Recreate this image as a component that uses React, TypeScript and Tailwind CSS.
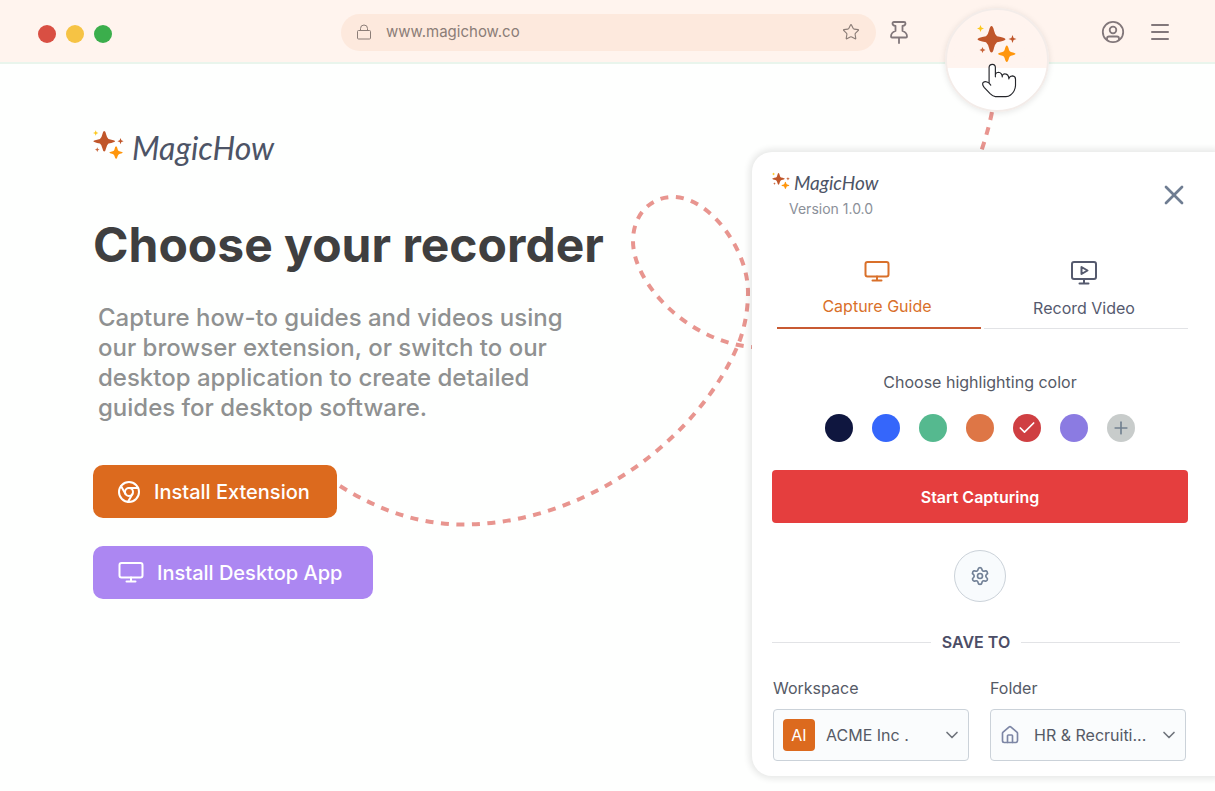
import { useState } from 'react';
import { Check, ChevronDown, Chromium, House, Menu, Plus, Settings, Star, X } from 'lucide-react';

const colors = [
  { name: 'Navy', className: 'bg-[#0f163f]' },
  { name: 'Blue', className: 'bg-[#3566fb]' },
  { name: 'Green', className: 'bg-[#55b98f]' },
  { name: 'Orange', className: 'bg-[#de7646]' },
  { name: 'Red', className: 'bg-[#cf3f42]' },
  { name: 'Purple', className: 'bg-[#8b7be2]' },
];

export default function App() {
  return (
    <div className="relative flex min-h-screen flex-col overflow-hidden bg-[#fefffe] font-['Inter',sans-serif]">
      <BrowserBar />
      <Trail />
      <div className="flex flex-1 items-start justify-between">
        <Intro />
        <ExtensionPanel />
      </div>
    </div>
  );
}

function BrowserBar() {
  return (
    <header className="relative z-10 flex h-16 items-center border-b-2 border-[#e9f5ec] bg-[#fff4ee] pt-[2px] pr-[43px] pl-[38px]">
      <div className="mt-[3px] flex gap-[10px]">
        <span className="size-[18px] rounded-full bg-[#d94f43]" />
        <span className="size-[18px] rounded-full bg-[#f6c344]" />
        <span className="size-[18px] rounded-full bg-[#3bae4c]" />
      </div>
      <div className="ml-[229px] flex h-[37px] flex-1 items-center rounded-full bg-[#fde9dd] pr-4 pl-[15px] text-[#8b7d77]">
        <LockIcon />
        <input
          aria-label="Address"
          defaultValue="www.magichow.co"
          className="ml-[14px] min-w-0 flex-1 bg-transparent text-[15px] outline-none"
        />
        <Star size={18} strokeWidth={1.5} />
      </div>
      <button aria-label="Pin" className="ml-[11px] text-[#82777a]">
        <PinIcon />
      </button>
      <button aria-label="Account" className="ml-[190px] text-[#82777a]">
        <AccountIcon />
      </button>
      <button aria-label="Menu" className="ml-[23px] text-[#82777a]">
        <Menu size={24} strokeWidth={2} />
      </button>

      {/* magnified extension icon */}
      <div className="absolute top-2 right-[166px] flex size-[104px] flex-col items-center rounded-full border-2 border-[#f3ece9] bg-linear-to-b from-[#fff4ef] from-58% to-white to-58% pt-[15px] shadow-[0_1px_6px_rgba(0,0,0,0.1)]">
        <Sparkles className="h-[38px] w-10" />
        <HandIcon />
      </div>
    </header>
  );
}

function Trail() {
  return (
    <svg
      className="pointer-events-none absolute top-0 right-0"
      width="1215"
      height="791"
      fill="none"
      stroke="#e8958f"
      strokeWidth="4"
      strokeDasharray="8 7.5"
      aria-hidden="true"
    >
      <path d="M340 486C380 511 420 524.500 463 524.500C590 524 700 435 738 345C744 330 748 312 748 292C748 250 710 197 673 197C650 197 633 215 633 241C633 285 690 342 752 347" />
      <path d="M992 112C989 127 985 140 980 155" />
    </svg>
  );
}

function Intro() {
  return (
    <main className="relative pt-[60px] pl-[93px]">
      <Logo
        className="gap-2"
        iconClass="mt-[6px] h-[30px] w-[31px]"
        textClass="text-[32px] leading-[48px]"
      />
      <h1 className="mt-[43px] text-5xl leading-[60px] font-bold text-[#3f3f40]">Choose your recorder</h1>
      <p className="mt-7 ml-[5px] w-[490px] text-2xl leading-[30px] font-medium text-[#8f9191]">
        Capture how-to guides and videos using our browser extension, or switch to our desktop application to
        create detailed guides for desktop software.
      </p>
      <div className="mt-[42px] flex flex-col items-start gap-7">
        <button className="flex h-[53px] items-center gap-[13px] rounded-[10px] bg-[#dc6a1e] pr-[27px] pl-6 text-xl font-medium text-white">
          <Chromium size={24} />
          Install Extension
        </button>
        <button className="flex h-[53px] items-center gap-[13px] rounded-[10px] bg-[#ac87f2] pr-[31px] pl-[25px] text-xl font-medium text-white">
          <MonitorIcon />
          Install Desktop App
        </button>
      </div>
    </main>
  );
}

function ExtensionPanel() {
  const [tab, setTab] = useState('guide');

  return (
    <aside className="relative mt-[88px] w-[463px] shrink-0 rounded-l-[20px] bg-white pt-[17px] pr-[27px] pb-[15px] pl-5 text-[#555a66] shadow-[0_0_6px_3px_rgba(0,0,0,0.09)]">
      <div className="flex items-start justify-between">
        <div>
          <Logo
            className="gap-1 pb-1"
            iconClass="mt-[3px] h-[18px] w-[18px]"
            textClass="text-[19px] leading-7"
          />
          <p className="ml-[17px] text-sm leading-4 text-[#8b9099]">Version 1.0.0</p>
        </div>
        <button aria-label="Close" className="mt-[10px] -mr-[2px] text-[#6f7d92]">
          <X size={32} strokeWidth={2} />
        </button>
      </div>

      <div role="tablist" className="mt-9 ml-[5px] flex gap-[3px]">
        <Tab label="Capture Guide" active={tab === 'guide'} onClick={() => setTab('guide')}>
          <MonitorIcon />
        </Tab>
        <Tab label="Record Video" active={tab === 'video'} onClick={() => setTab('video')}>
          <MonitorPlayIcon />
        </Tab>
      </div>

      <ColorPicker />

      <button className="mt-7 h-[53px] w-full rounded bg-[#e53e3e] text-base font-semibold text-white">
        Start Capturing
      </button>

      <button
        aria-label="Settings"
        className="mx-auto mt-[27px] flex size-[52px] items-center justify-center rounded-full border border-[#cbd2d9] bg-[#f8fbfd] text-[#718096]"
      >
        <Settings size={20} />
      </button>

      <div className="mt-7 mr-2 flex items-center gap-[11px]">
        <span className="h-px flex-1 bg-[#e2e3e6]" />
        <h2 className="text-base font-semibold text-[#4c4d66]">SAVE TO</h2>
        <span className="h-px flex-1 bg-[#e2e3e6]" />
      </div>

      <div className="mt-[22px] mr-[2px] ml-px grid grid-cols-2 gap-[21px]">
        <SelectField id="workspace" label="Workspace" value="ACME Inc ." selectClass="pl-[52px]">
          <span className="flex size-8 items-center justify-center rounded bg-[#dc6a1e] text-base text-white">
            AI
          </span>
        </SelectField>
        <SelectField id="folder" label="Folder" value="HR & Recruiti..." selectClass="pl-[43px]">
          <House size={20} className="text-[#7d86a5]" />
        </SelectField>
      </div>
    </aside>
  );
}

interface TabProps {
  label: string;
  active: boolean;
  onClick: () => void;
  children: React.ReactNode;
}

function Tab({ label, active, onClick, children }: TabProps) {
  return (
    <button
      role="tab"
      aria-selected={active}
      onClick={onClick}
      className={`flex h-[76px] flex-1 flex-col items-center gap-[11px] pt-2 pr-1 text-base ${
        active ? 'border-b-2 border-[#c85a32] text-[#d9702a]' : 'border-b border-[#e2e3e6] text-[#555a6e]'
      }`}
    >
      {children}
      {label}
    </button>
  );
}

function ColorPicker() {
  const [selected, setSelected] = useState('Red');

  return (
    <fieldset className="mt-[41px]">
      <legend className="mx-auto text-base">Choose highlighting color</legend>
      <div className="mt-5 flex justify-center gap-[19px]">
        {colors.map((color) => (
          <label key={color.name} className="relative size-7 text-white">
            <input
              type="radio"
              name="highlight"
              aria-label={color.name}
              checked={selected === color.name}
              onChange={() => setSelected(color.name)}
              className={`block size-7 appearance-none rounded-full ${color.className}`}
            />
            {selected === color.name && (
              <Check size={20} strokeWidth={2} className="pointer-events-none absolute top-1 left-1" />
            )}
          </label>
        ))}
        <button
          aria-label="Add color"
          className="flex size-7 items-center justify-center rounded-full bg-[#c8cccb] text-[#718090]"
        >
          <Plus size={20} strokeWidth={2} />
        </button>
      </div>
    </fieldset>
  );
}

interface SelectFieldProps {
  id: string;
  label: string;
  value: string;
  selectClass: string;
  children: React.ReactNode;
}

function SelectField({ id, label, value, selectClass, children }: SelectFieldProps) {
  return (
    <div>
      <label htmlFor={id} className="text-base leading-6">
        {label}
      </label>
      <div className="relative mt-[9px]">
        <select
          id={id}
          className={`h-[52px] w-full appearance-none rounded border border-[#cbd2d9] bg-[#fafcfd] pr-8 text-base ${selectClass}`}
        >
          <option>{value}</option>
        </select>
        <span className="pointer-events-none absolute inset-y-0 left-[10px] flex items-center">{children}</span>
        <ChevronDown
          size={20}
          className="pointer-events-none absolute top-4 right-[7px] text-[#6f747c]"
        />
      </div>
    </div>
  );
}

function Logo({ className, iconClass, textClass }: { className: string; iconClass: string; textClass: string }) {
  return (
    <div className={`flex items-start ${className}`}>
      <Sparkles className={iconClass} />
      <span className={`font-['Lato',sans-serif] text-[#4d5466] italic ${textClass}`}>MagicHow</span>
    </div>
  );
}

function Sparkles({ className }: { className: string }) {
  return (
    <svg viewBox="0 0 40 38" className={`shrink-0 ${className}`} aria-hidden="true">
      <path fill="#c0562a" d="M14.5 1Q16 1 17 5.500Q18 10 20 11.300Q28.500 13 28.500 14.200Q28.500 15.500 20 17.200Q18 19 17 23Q16 27.500 14.500 27.500Q13 27.500 12 23Q11 19 9 17.200Q.5 15.500 .5 14.200Q.5 13 9 11.300Q11 10 12 5.500Q13 1 14.500 1Z" />
      <path fill="#ff960c" d="M29.800 20.500Q31 20.500 32 25Q32.500 26.500 34 27Q38.500 28 38.500 28.800Q38.500 29.700 34 30.700Q32.500 31.200 32 33Q31 37 29.800 37Q28.600 37 27.600 33Q27.200 31.200 25.500 30.700Q21 29.700 21 28.800Q21 28 25.500 27Q27.200 26.500 27.600 25Q28.600 20.500 29.800 20.500Z" />
      <path fill="#fcc81c" d="M3.500 0L4.500 2.500L7 3.500L4.500 4.500L3.500 7L2.500 4.500L0 3.500L2.500 2.500Z" />
      <path fill="#c0562a" d="M35.500 10L36.600 12.900L39.500 14L36.600 15.100L35.500 18L34.400 15.100L31.500 14L34.400 12.900Z" />
      <path fill="#c8643a" d="M5.500 22L6.400 24.100L8.500 25L6.400 25.900L5.500 28L4.600 25.900L2.500 25L4.600 24.100Z" />
    </svg>
  );
}

function HandIcon() {
  return (
    <svg viewBox="545 190 108 106" className="ml-1 h-[35px] w-9 shrink-0" aria-hidden="true">
      <path
        fill="#fff"
        stroke="#25262b"
        strokeWidth="3.500"
        strokeLinecap="round"
        strokeLinejoin="round"
        d="M574 257L569 251V204Q569 194 579 194Q588 194 588 204V232V225Q590 218 597 218Q608 219 609 232V228Q612 222 618 223Q628 224 629 238V236Q632 229 640 229Q649 230 649 239V258Q648 276 634 287Q628 292 620 292H588Q580 291 572 283L554 264Q546 254 552 248Q559 244 569 251"
      />
    </svg>
  );
}

function LockIcon() {
  return (
    <svg width="16" height="16" viewBox="0 0 16 16" fill="none" stroke="currentColor" aria-hidden="true">
      <rect x="1.500" y="6.500" width="13" height="8.500" rx="1" />
      <path d="M4.500 6.500V4.500a3.500 3.500 0 0 1 7 0v2" />
    </svg>
  );
}

function PinIcon() {
  return (
    <svg width="24" height="24" viewBox="0 0 24 24" fill="none" stroke="currentColor" strokeWidth="1.800" strokeLinejoin="round" strokeLinecap="round" aria-hidden="true">
      <path d="M7 2H17Q18.500 2 18.500 3.500Q18.500 5.500 15.500 6V11Q20 12.500 20 16.500Q20 17.500 19 17.500H5Q4 17.500 4 16.500Q4 12.500 8.500 11V6Q5.500 5.500 5.500 3.500Q5.500 2 7 2ZM12 17.500V23" />
    </svg>
  );
}

function AccountIcon() {
  return (
    <svg width="24" height="24" viewBox="0 0 24 24" fill="none" stroke="currentColor" strokeWidth="1.800" aria-hidden="true">
      <circle cx="12" cy="12" r="10.200" />
      <circle cx="12" cy="10" r="3.300" />
      <path d="M6 20V18.500Q6 16.500 8 16.500H16Q18 16.500 18 18.500V20" />
    </svg>
  );
}

function MonitorIcon() {
  return (
    <svg width="26" height="22" viewBox="0 0 26 22" fill="none" stroke="currentColor" strokeWidth="2" strokeLinecap="round" aria-hidden="true">
      <rect x="1.500" y="1" width="23" height="14.500" rx="2" />
      <path d="M13 15.500V19M8.500 19.500H17.500" />
    </svg>
  );
}

function MonitorPlayIcon() {
  return (
    <svg width="26" height="24" viewBox="0 0 26 24" fill="none" stroke="currentColor" strokeWidth="2" strokeLinecap="round" strokeLinejoin="round" aria-hidden="true">
      <rect x="1" y="1" width="24" height="17" rx="2" />
      <path d="M13 18V22M8.500 22.500H17.500M10.500 6V13L16.500 9.500Z" />
    </svg>
  );
}
